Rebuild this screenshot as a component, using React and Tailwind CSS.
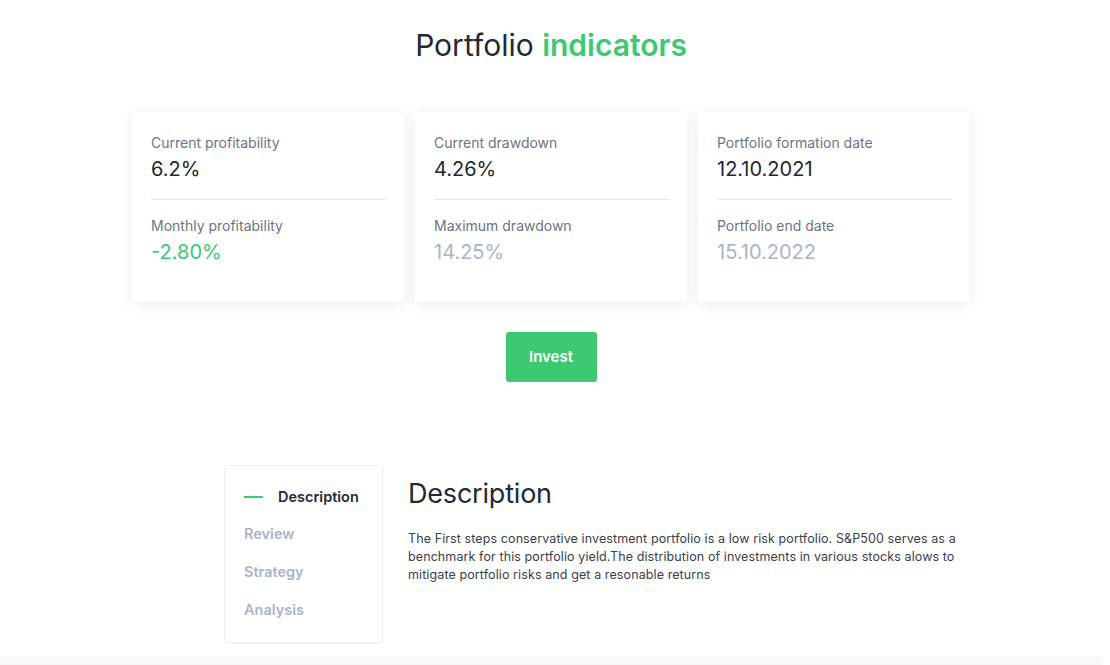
const cards = [
  {
    top: { label: "Current profitability", value: "6.2%" },
    bottom: { label: "Monthly profitability", value: "-2.80%", tone: "green" },
  },
  {
    top: { label: "Current drawdown", value: "4.26%" },
    bottom: { label: "Maximum drawdown", value: "14.25%", tone: "muted" },
  },
  {
    top: { label: "Portfolio formation date", value: "12.10.2021" },
    bottom: { label: "Portfolio end date", value: "15.10.2022", tone: "muted" },
  },
];

const tabs = ["Description", "Review", "Strategy", "Analysis"];

function Stat({ label, value, tone }) {
  const color =
    tone === "green"
      ? "text-[#3cc971]"
      : tone === "muted"
      ? "text-[#a8b5c8]"
      : "text-[#1f2633]";
  return (
    <div>
      <div className="text-[14px] leading-[18px] text-[#6d7482]">{label}</div>
      <div className={`mt-[5px] text-[20px] leading-[24px] ${color}`}>{value}</div>
    </div>
  );
}

export default function App() {
  return (
    <div
      className="min-h-[665px] bg-white pr-2"
      style={{ fontFamily: "Inter, Lato, sans-serif" }}
    >
      <h1 className="pt-[27px] text-center text-[30px] leading-[36px] text-[#222a36]">
        Portfolio <span className="font-semibold text-[#3cc971]">indicators</span>
      </h1>

      <div className="mx-auto mt-[49px] flex w-[838px] gap-[11px]">
        {cards.map((card, i) => (
          <div
            key={i}
            className="h-[190px] w-[272px] bg-white pl-[19px] pr-[18px] pt-[22px] shadow-[0_2px_14px_rgba(0,0,0,0.08)]"
          >
            <Stat {...card.top} />
            <div className="mt-[18px] mb-[17px] h-px bg-[#e3e7ee]" />
            <Stat {...card.bottom} />
          </div>
        ))}
      </div>

      <div className="mt-[30px] flex justify-center">
        <button className="h-[50px] w-[91px] rounded-[3px] bg-[#3cc971] text-[15px] font-semibold text-white">
          Invest
        </button>
      </div>

      <div className="ml-[224px] mt-[83px] flex gap-[25px]">
        <div className="h-[178px] w-[159px] rounded-[3px] border border-[#eceef1] pl-[19px] pt-[20px] shadow-[0_1px_2px_rgba(0,0,0,0.04)]">
          {tabs.map((tab, i) => (
            <div key={tab} className="flex h-[38px] items-start">
              {i === 0 ? (
                <div className="flex items-center pt-[1px]">
                  <span className="mr-[15px] h-[2px] w-[19px] bg-[#3cc971]" />
                  <span className="text-[14.5px] font-semibold leading-[20px] text-[#222a36]">
                    {tab}
                  </span>
                </div>
              ) : (
                <span className="text-[14.5px] font-semibold leading-[20px] text-[#a8b5c8]">
                  {tab}
                </span>
              )}
            </div>
          ))}
        </div>

        <div className="w-[552px]">
          <h2 className="pt-[13px] text-[27px] leading-[32px] tracking-[-0.2px] text-[#222a36]">Description</h2>
          <p className="mt-[20px] text-[12.5px] leading-[18px] tracking-[0.1px] text-[#3b404b]">
            The First steps conservative investment portfolio is a low risk portfolio. S&amp;P500 serves as a benchmark for this portfolio yield.The distribution of investments in various stocks alows to mitigate portfolio risks and get a resonable returns
          </p>
        </div>
      </div>

      <div className="mt-[14px] h-[8px] bg-[#f8f8f8]" />
    </div>
  );
}
